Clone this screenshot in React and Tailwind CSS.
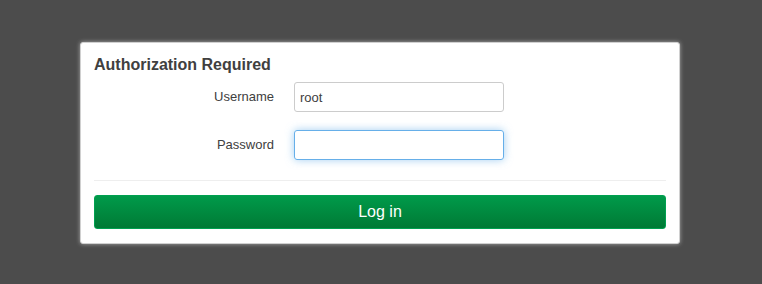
export default function App() {
  return (
    <div className="flex h-[284px] w-full items-start bg-[#4c4c4c] pl-[80px] pt-[42px] font-['Liberation_Sans',Arial,sans-serif]">
      <div className="w-[600px] rounded-[3px] border border-[#d0d0d0] bg-white px-[13px] pb-[14px] pt-[12px] shadow-[0_0_4px_rgba(255,255,255,0.5)]">
        <h2 className="text-[16px] font-bold leading-[19px] text-[#404040]">Authorization Required</h2>
        <div className="mt-[8px] flex flex-col gap-[18px]">
          <div className="flex items-center">
            <label className="w-[200px] pr-[20px] text-right text-[13px] text-[#404040]">Username</label>
            <input
              defaultValue="root"
              className="h-[30px] w-[210px] rounded-[3px] border border-[#cccccc] px-[5px] text-[13px] text-[#404040] outline-none"
            />
          </div>
          <div className="flex items-center">
            <label className="w-[200px] pr-[20px] text-right text-[13px] text-[#404040]">Password</label>
            <input
              type="password"
              className="h-[30px] w-[210px] rounded-[3px] border border-[#66afe9] px-[5px] text-[13px] outline-none shadow-[0_0_8px_rgba(102,175,233,0.6)]"
            />
          </div>
        </div>
        <div className="mt-[20px] border-t border-[#eeeeee]" />
        <button className="mt-[14px] h-[34px] w-full rounded-[3px] border border-[#00a050] bg-gradient-to-b from-[#009a4a] to-[#007a35] text-[16px] text-white">
          Log in
        </button>
      </div>
    </div>
  )
}
